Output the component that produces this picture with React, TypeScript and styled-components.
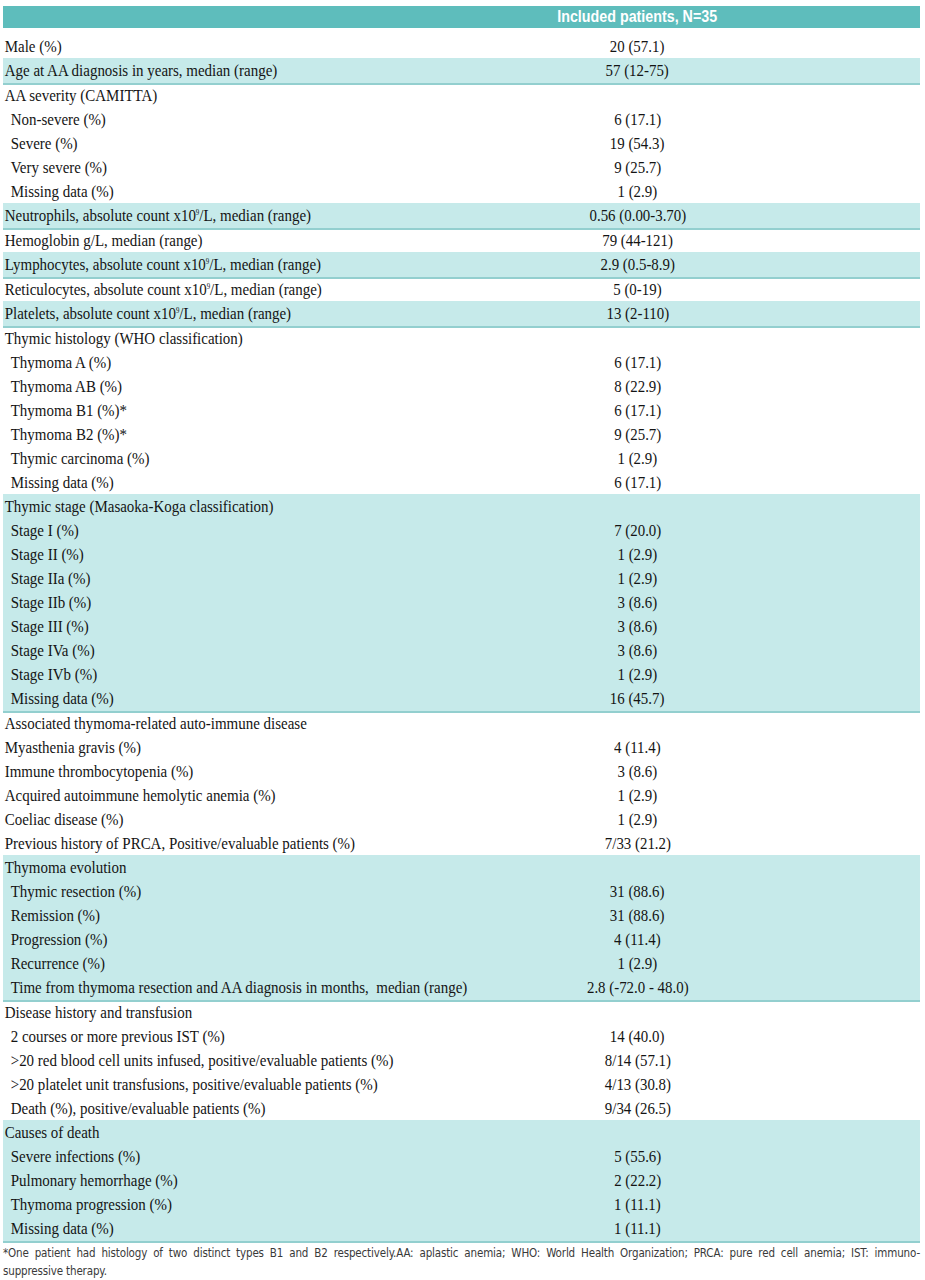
import React from "react";
import styled, { createGlobalStyle } from "styled-components";

const Global = createGlobalStyle`
  html, body { margin: 0; padding: 0; background: #ffffff; }
  body { font-family: "Liberation Serif", "Times New Roman", serif; color: #141414; }
`;

type Row = { label: React.ReactNode; value?: string; indent?: boolean };
type Group = { shade: boolean; rows: Row[] };

const Sup = styled.sup`
  font-size: 8px;
  vertical-align: 6px;
  line-height: 0;
`;

const x109 = (pre: string, post: string) => (
  <>
    {pre}x10<Sup>9</Sup>/L{post}
  </>
);

const groups: Group[] = [
  { shade: false, rows: [{ label: "Male (%)", value: "20 (57.1)" }] },
  { shade: true, rows: [{ label: "Age at AA diagnosis in years, median (range)", value: "57 (12-75)" }] },
  {
    shade: false,
    rows: [
      { label: "AA severity (CAMITTA)" },
      { label: "Non-severe (%)", value: "6 (17.1)", indent: true },
      { label: "Severe (%)", value: "19 (54.3)", indent: true },
      { label: "Very severe (%)", value: "9 (25.7)", indent: true },
      { label: "Missing data (%)", value: "1 (2.9)", indent: true },
    ],
  },
  { shade: true, rows: [{ label: x109("Neutrophils, absolute count ", ", median (range)"), value: "0.56 (0.00-3.70)" }] },
  { shade: false, rows: [{ label: "Hemoglobin g/L, median (range)", value: "79 (44-121)" }] },
  { shade: true, rows: [{ label: x109("Lymphocytes, absolute count ", ", median (range)"), value: "2.9 (0.5-8.9)" }] },
  { shade: false, rows: [{ label: x109("Reticulocytes, absolute count ", ", median (range)"), value: "5 (0-19)" }] },
  { shade: true, rows: [{ label: x109("Platelets, absolute count ", ", median (range)"), value: "13 (2-110)" }] },
  {
    shade: false,
    rows: [
      { label: "Thymic histology (WHO classification)" },
      { label: "Thymoma A (%)", value: "6 (17.1)", indent: true },
      { label: "Thymoma AB (%)", value: "8 (22.9)", indent: true },
      { label: "Thymoma B1 (%)*", value: "6 (17.1)", indent: true },
      { label: "Thymoma B2 (%)*", value: "9 (25.7)", indent: true },
      { label: "Thymic carcinoma (%)", value: "1 (2.9)", indent: true },
      { label: "Missing data (%)", value: "6 (17.1)", indent: true },
    ],
  },
  {
    shade: true,
    rows: [
      { label: "Thymic stage (Masaoka-Koga classification)" },
      { label: "Stage I (%)", value: "7 (20.0)", indent: true },
      { label: "Stage II (%)", value: "1 (2.9)", indent: true },
      { label: "Stage IIa (%)", value: "1 (2.9)", indent: true },
      { label: "Stage IIb (%)", value: "3 (8.6)", indent: true },
      { label: "Stage III (%)", value: "3 (8.6)", indent: true },
      { label: "Stage IVa (%)", value: "3 (8.6)", indent: true },
      { label: "Stage IVb (%)", value: "1 (2.9)", indent: true },
      { label: "Missing data (%)", value: "16 (45.7)", indent: true },
    ],
  },
  {
    shade: false,
    rows: [
      { label: "Associated thymoma-related auto-immune disease" },
      { label: "Myasthenia gravis (%)", value: "4 (11.4)" },
      { label: "Immune thrombocytopenia (%)", value: "3 (8.6)" },
      { label: "Acquired autoimmune hemolytic anemia (%)", value: "1 (2.9)" },
      { label: "Coeliac disease (%)", value: "1 (2.9)" },
      { label: "Previous history of PRCA, Positive/evaluable patients (%)", value: "7/33 (21.2)" },
    ],
  },
  {
    shade: true,
    rows: [
      { label: "Thymoma evolution" },
      { label: "Thymic resection (%)", value: "31 (88.6)", indent: true },
      { label: "Remission (%)", value: "31 (88.6)", indent: true },
      { label: "Progression (%)", value: "4 (11.4)", indent: true },
      { label: "Recurrence (%)", value: "1 (2.9)", indent: true },
      {
        label: "Time from thymoma resection and AA diagnosis in months,\u00a0 median (range)",
        value: "2.8 (-72.0 - 48.0)",
        indent: true,
      },
    ],
  },
  {
    shade: false,
    rows: [
      { label: "Disease history and transfusion" },
      { label: "2 courses or more previous IST (%)", value: "14 (40.0)", indent: true },
      { label: ">20 red blood cell units infused, positive/evaluable patients (%)", value: "8/14 (57.1)", indent: true },
      { label: ">20 platelet unit transfusions, positive/evaluable patients (%)", value: "4/13 (30.8)", indent: true },
      { label: "Death (%), positive/evaluable patients (%)", value: "9/34 (26.5)", indent: true },
    ],
  },
  {
    shade: true,
    rows: [
      { label: "Causes of death" },
      { label: "Severe infections (%)", value: "5 (55.6)", indent: true },
      { label: "Pulmonary hemorrhage (%)", value: "2 (22.2)", indent: true },
      { label: "Thymoma progression (%)", value: "1 (11.1)", indent: true },
      { label: "Missing data (%)", value: "1 (11.1)", indent: true },
    ],
  },
];

const Page = styled.div`
  width: 917px;
  margin: 0 0 0 3px;
  padding-top: 6px;
`;

const HeaderBar = styled.div`
  display: grid;
  grid-template-columns: 352px 1fr;
  height: 22px;
  align-items: center;
  background: #5ebdbc;
  margin-bottom: 6px;
`;

const HeaderTitle = styled.span`
  grid-column: 2;
  justify-self: center;
  display: inline-block;
  color: #ffffff;
  font-family: "Liberation Sans", Arial, sans-serif;
  font-weight: 700;
  font-size: 17px;
  line-height: 22px;
  transform: scaleX(0.84);
  transform-origin: center center;
`;

const GroupBox = styled.div<{ $shade: boolean }>`
  display: flex;
  flex-direction: column;
  background: ${(p) => (p.$shade ? "#c6eaea" : "transparent")};
  border-top: ${(p) => (p.$shade ? "3px solid #ffffff" : "0")};
  border-bottom: ${(p) => (p.$shade ? "2px solid #93cfcf" : "0")};
  margin-bottom: ${(p) => (p.$shade ? "-2px" : "0")};
  margin-top: ${(p) => (p.$shade ? "-3px" : "0")};
  padding-bottom: ${(p) => (p.$shade ? "1px" : "0")};
`;

const RowLine = styled.div`
  display: grid;
  grid-template-columns: 352px 1fr;
  height: 24px;
  align-items: center;
  white-space: nowrap;
`;

const Label = styled.span<{ $indent?: boolean }>`
  display: inline-block;
  justify-self: start;
  font-size: 17.5px;
  line-height: 24px;
  padding-left: ${(p) => (p.$indent ? "9px" : "2px")};
  transform: scaleX(0.855);
  transform-origin: left center;
`;

const Value = styled.span`
  display: inline-block;
  justify-self: center;
  font-size: 17.5px;
  line-height: 24px;
  transform: scaleX(0.85);
  transform-origin: center center;
`;

const Footnote = styled.div`
  margin-top: 3px;
  font-family: "DejaVu Sans Condensed", "Liberation Sans", sans-serif;
  font-size: 11.5px;
  letter-spacing: -0.15px;
  color: #3a3a3a;
  line-height: 18px;
`;

const FootLine = styled.div<{ $justify?: boolean }>`
  text-align: ${(p) => (p.$justify ? "justify" : "left")};
  text-align-last: ${(p) => (p.$justify ? "justify" : "left")};
  white-space: ${(p) => (p.$justify ? "normal" : "nowrap")};
`;

export default function App() {
  return (
    <>
      <Global />
      <Page>
        <HeaderBar>
          <HeaderTitle>Included patients, N=35</HeaderTitle>
        </HeaderBar>
        {groups.map((g, gi) => (
          <GroupBox key={gi} $shade={g.shade}>
            {g.rows.map((r, ri) => (
              <RowLine key={ri}>
                <Label $indent={r.indent}>{r.label}</Label>
                {r.value ? <Value>{r.value}</Value> : <span />}
              </RowLine>
            ))}
          </GroupBox>
        ))}
        <Footnote>
          <FootLine $justify>
            *One patient had histology of two distinct types B1 and B2 respectively.AA: aplastic anemia; WHO: World Health
            Organization; PRCA: pure red cell anemia; IST: immuno-
          </FootLine>
          <FootLine>suppressive therapy.</FootLine>
        </Footnote>
      </Page>
    </>
  );
}
